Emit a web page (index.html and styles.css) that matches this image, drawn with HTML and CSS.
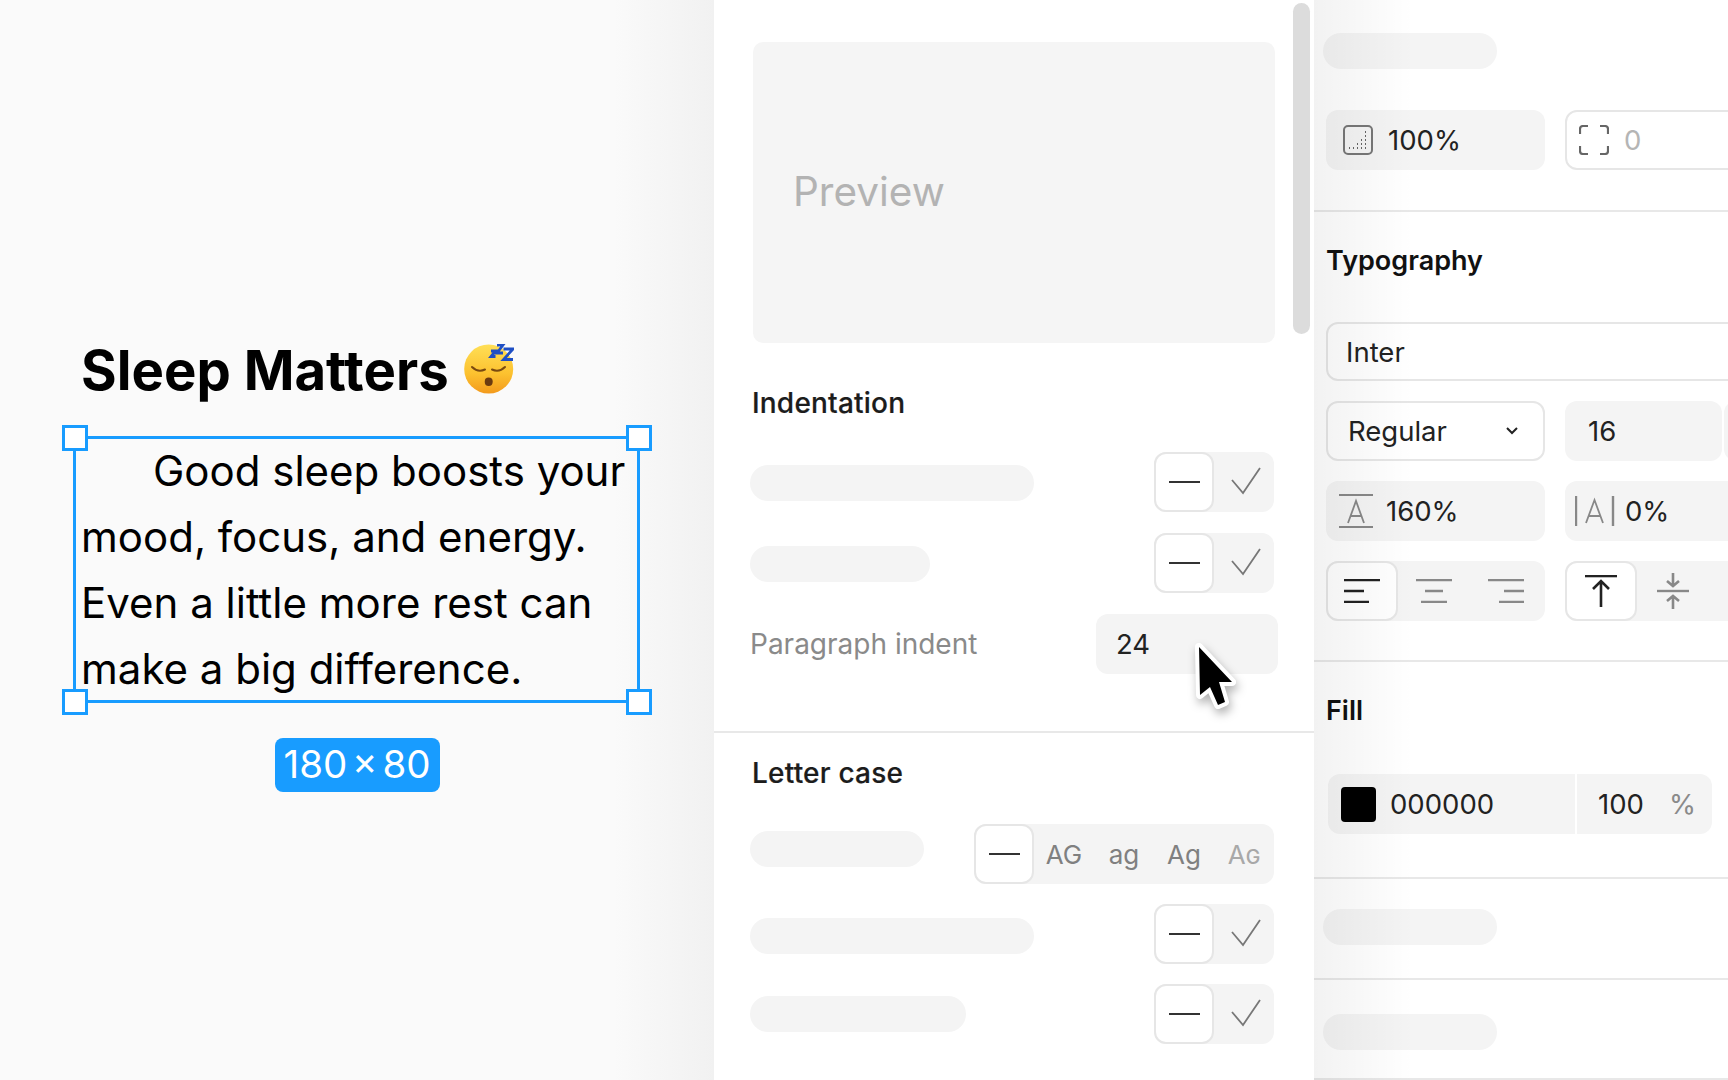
FILE: index.html
```html
<!DOCTYPE html>
<html lang="en">

<head>
  <meta charset="UTF-8">
  <title>Typography panel</title>
  <link rel="stylesheet" href="styles.css">
</head>

<body>
  <svg class="defs" width="0" height="0">
    <symbol id="minus" viewBox="0 0 60 60">
      <path d="M15 30H46" fill="none" stroke="#333" stroke-width="2" />
    </symbol>
    <symbol id="check" viewBox="0 0 60 60">
      <path d="M18 28L29 41L46 16" fill="none" stroke="#777" stroke-width="1.8" />
    </symbol>
  </svg>

  <div class="canvas">
    <h1 class="title">Sleep Matters
      <svg class="emoji" width="50" height="51" viewBox="0 -1 50 51">
        <defs>
          <linearGradient id="face" x1="0" y1="0" x2="0" y2="1">
            <stop offset="0" stop-color="#ffdf56" />
            <stop offset="0.6" stop-color="#fcc12f" />
            <stop offset="1" stop-color="#f39a1c" />
          </linearGradient>
        </defs>
        <circle cx="24.700" cy="24" r="24.500" fill="url(#face)" />
        <path d="M8 22Q14 28 21 24.500M28 24.500Q35 28 41 22" fill="none" stroke="#7a4a10" stroke-width="2" stroke-linecap="round" />
        <ellipse cx="24.700" cy="36.700" rx="4" ry="4.200" fill="#6b3a10" />
        <path d="M27 6h4.500l-4.500 5.500h4.500M33 0h6l-6 8h6M39.500 4h9.500l-9.500 10.500h9.500" fill="none" stroke="#1f4fc4" stroke-width="2.800" />
      </svg>
    </h1>
    <div class="selection">
      <p class="selection-text">Good sleep boosts your mood, focus, and energy. Even a little more rest can make a big difference.</p>
      <span class="handle top-left"></span>
      <span class="handle top-right"></span>
      <span class="handle bottom-left"></span>
      <span class="handle bottom-right"></span>
    </div>
    <div class="size-badge">180 × 80</div>
  </div>

  <div class="settings">
    <div class="scrollbar"></div>
    <div class="preview">Preview</div>

    <section class="settings-section first">
      <h2 class="section-title">Indentation</h2>
      <div class="rows">
        <div class="row">
          <div class="pill w-284 low"></div>
          <div class="segmented">
            <div class="seg active"><svg width="60" height="60"><use href="#minus" /></svg></div>
            <div class="seg"><svg width="60" height="60"><use href="#check" /></svg></div>
          </div>
        </div>
        <div class="row">
          <div class="pill w-180 low"></div>
          <div class="segmented">
            <div class="seg active"><svg width="60" height="60"><use href="#minus" /></svg></div>
            <div class="seg"><svg width="60" height="60"><use href="#check" /></svg></div>
          </div>
        </div>
        <div class="row">
          <span class="row-label">Paragraph indent</span>
          <div class="indent-input">24</div>
        </div>
      </div>
    </section>

    <section class="settings-section second">
      <h2 class="section-title">Letter case</h2>
      <div class="rows tight">
        <div class="row">
          <div class="pill w-174 up"></div>
          <div class="segmented">
            <div class="seg active"><svg width="60" height="60"><use href="#minus" /></svg></div>
            <div class="seg case">AG</div>
            <div class="seg case">ag</div>
            <div class="seg case">Ag</div>
            <div class="seg case small">Ag</div>
          </div>
        </div>
        <div class="row">
          <div class="pill w-284 down"></div>
          <div class="segmented">
            <div class="seg active"><svg width="60" height="60"><use href="#minus" /></svg></div>
            <div class="seg"><svg width="60" height="60"><use href="#check" /></svg></div>
          </div>
        </div>
        <div class="row">
          <div class="pill w-216"></div>
          <div class="segmented">
            <div class="seg active"><svg width="60" height="60"><use href="#minus" /></svg></div>
            <div class="seg"><svg width="60" height="60"><use href="#check" /></svg></div>
          </div>
        </div>
      </div>
    </section>
  </div>

  <div class="inspector">
    <section class="block block-layer">
      <div class="pill block-pill"></div>
      <div class="field-row">
        <div class="field">
          <svg class="field-icon" width="30" height="30" viewBox="0 0 30 30">
            <rect x="1" y="1" width="28" height="28" rx="4" fill="none" stroke="#777" stroke-width="2" />
            <path d="M6 23h1M10 23h1M14 23h1M18 23h1M22 23h1M14 19h1M18 19h1M22 19h1M18 15h1M22 15h1M22 11h1M22 7h1" stroke="#666" stroke-width="1.800" />
          </svg>
          100%
        </div>
        <div class="field outlined corner-field">
          <svg class="field-icon" width="30" height="30" viewBox="0 0 30 30">
            <path d="M1 9V4Q1 1 4 1H9M21 1H26Q29 1 29 4V9M29 21V26Q29 29 26 29H21M9 29H4Q1 29 1 26V21" fill="none" stroke="#666" stroke-width="2.200" />
          </svg>
          <span class="muted">0</span>
        </div>
      </div>
    </section>

    <section class="block block-type">
      <h2 class="block-title">Typography</h2>
      <div class="field outlined font-field">Inter</div>
      <div class="field-row">
        <div class="field outlined style-field">Regular
          <svg width="14" height="10" viewBox="0 0 14 10">
            <path d="M2 2L7 7L12 2" fill="none" stroke="#222" stroke-width="2" />
          </svg>
        </div>
        <div class="size-group">
          <div class="field size-field">16</div>
          <div class="field size-rest"></div>
        </div>
      </div>
      <div class="field-row">
        <div class="field line-field">
          <svg class="metric-icon" width="34" height="34" viewBox="0 0 34 34">
            <path d="M0 1H34M0 33H34" stroke="#888" stroke-width="2" />
            <path d="M9 29L17 7L25 29M12 22H22" fill="none" stroke="#888" stroke-width="1.800" />
          </svg>
          160%
        </div>
        <div class="field spacing-field">
          <svg class="metric-icon" width="40" height="30" viewBox="0 0 40 30">
            <path d="M1 0V30M38 0V30" stroke="#888" stroke-width="2.400" />
            <path d="M11 27L19.500 4L28 27M14 20H25" fill="none" stroke="#888" stroke-width="1.800" />
          </svg>
          0%
        </div>
      </div>
      <div class="field-row">
        <div class="segmented align-group">
          <div class="seg align active">
            <svg width="36" height="24" viewBox="0 0 36 24">
              <path d="M0 1H36M0 12H20M0 23H25" stroke="#222" stroke-width="2.400" />
            </svg>
          </div>
          <div class="seg align">
            <svg width="36" height="24" viewBox="0 0 36 24">
              <path d="M0 1H36M9 12H27M5 23H31" stroke="#888" stroke-width="2.400" />
            </svg>
          </div>
          <div class="seg align">
            <svg width="36" height="24" viewBox="0 0 36 24">
              <path d="M0 1H36M16 12H36M11 23H36" stroke="#888" stroke-width="2.400" />
            </svg>
          </div>
        </div>
        <div class="segmented valign-group">
          <div class="seg align active">
            <svg width="34" height="32" viewBox="0 0 34 32">
              <path d="M1 1H33" stroke="#222" stroke-width="2.600" />
              <path d="M17 32V6M9 14L17 6L25 14" fill="none" stroke="#222" stroke-width="2.600" />
            </svg>
          </div>
          <div class="seg align">
            <svg width="34" height="36" viewBox="0 0 34 36">
              <path d="M1 18H33" stroke="#888" stroke-width="2.400" />
              <path d="M17 0V13M11 8L17 13L23 8M17 36V23M11 28L17 23L23 28" fill="none" stroke="#888" stroke-width="2.600" />
            </svg>
          </div>
        </div>
      </div>
    </section>

    <section class="block block-fill">
      <h2 class="block-title">Fill</h2>
      <div class="fill-field">
        <div class="fill-color">
          <span class="swatch"></span>
          000000
        </div>
        <div class="fill-opacity">100<span class="percent">%</span></div>
      </div>
    </section>

    <section class="block block-empty one">
      <div class="pill block-pill"></div>
    </section>
    <section class="block block-empty two">
      <div class="pill block-pill"></div>
    </section>
  </div>

  <svg class="cursor" width="70" height="80" viewBox="0 0 70 80">
    <path d="M5 5L38 40H25L31 60L24 63L16 45L6 53Z" fill="#000" stroke="#fff" stroke-width="8" stroke-linejoin="round" paint-order="stroke" />
  </svg>
</body>

</html>
```

FILE: styles.css
```css
* {
  margin: 0;
  padding: 0;
  box-sizing: border-box;
}

body {
  display: flex;
  width: 1728px;
  height: 1080px;
  overflow: hidden;
  background-color: #fff;
  color: #222;
  font-family: "Inter", sans-serif;
  font-size: 27.5px;
}

.defs {
  position: absolute;
}

/* canvas on the left */
.canvas {
  width: 714px;
  flex-shrink: 0;
  padding-top: 335px;
  background: linear-gradient(90deg, #fafafa 86%, #f1f1f1 100%);
  color: #000;
}

.title {
  display: flex;
  align-items: center;
  gap: 15px;
  height: 70px;
  margin-left: 81px;
  font-size: 54.500px;
  font-weight: 700;
  line-height: 70px;
}

.emoji {
  margin-top: -2px;
}

.selection {
  position: relative;
  width: 567px;
  height: 267px;
  margin-top: 31px;
  margin-left: 73px;
  padding: 0 5px;
  border: 3px solid #189cff;
}

.selection-text {
  margin-top: -1px;
  font-size: 42px;
  line-height: 66px;
  text-indent: 72px;
}

.handle {
  position: absolute;
  width: 26px;
  height: 26px;
  background-color: #fff;
  border: 3px solid #189cff;
}

.top-left {
  top: -14px;
  left: -14px;
}

.top-right {
  top: -14px;
  right: -15px;
}

.bottom-left {
  bottom: -15px;
  left: -14px;
}

.bottom-right {
  bottom: -15px;
  right: -15px;
}

.size-badge {
  width: 165px;
  height: 54px;
  margin-top: 35px;
  margin-left: 274.500px;
  background-color: #189cff;
  border-radius: 8px;
  color: #fff;
  font-size: 38.500px;
  line-height: 52px;
  text-align: center;
  word-spacing: -6px;
}

/* middle panel */
.settings {
  position: relative;
  width: 600px;
  flex-shrink: 0;
  padding-top: 42px;
  background-color: #fff;
}

.scrollbar {
  position: absolute;
  top: 3px;
  left: 579px;
  width: 17px;
  height: 331px;
  background-color: #dcdcdc;
  border-radius: 9px;
}

.preview {
  display: flex;
  align-items: center;
  width: 522px;
  height: 301px;
  margin-left: 39px;
  padding-bottom: 2px;
  padding-left: 40px;
  background-color: #f5f5f5;
  border-radius: 10px;
  color: #b3b3b3;
  font-size: 40.500px;
}

.settings-section {
  padding-right: 40px;
  padding-left: 36px;
}

.settings-section.first {
  height: 390px;
  padding-top: 44px;
  border-bottom: 2px solid #e8e8e8;
}

.settings-section.second {
  padding-top: 24px;
}

.section-title {
  margin-left: 2px;
  color: #1c1c1c;
  font-size: 28px;
  font-weight: 500;
  letter-spacing: 0.2px;
  line-height: 32px;
  -webkit-text-stroke: 0.2px #1c1c1c;
}

.rows {
  display: flex;
  flex-direction: column;
  gap: 21px;
  margin-top: 33px;
}

.rows.tight {
  gap: 20px;
  margin-top: 35px;
}

.row {
  display: flex;
  justify-content: space-between;
  align-items: center;
  height: 60px;
}

.pill {
  height: 36px;
  background-color: #f4f4f4;
  border-radius: 18px;
}

.pill.low {
  margin-top: 2px;
}

.pill.up {
  margin-bottom: 10px;
}

.pill.down {
  margin-top: 3px;
}

.w-284 {
  width: 284px;
}

.w-180 {
  width: 180px;
}

.w-174 {
  width: 174px;
}

.w-216 {
  width: 216px;
}

.segmented {
  display: flex;
  height: 60px;
  flex-shrink: 0;
  background-color: #f4f4f4;
  border-radius: 12px;
}

.seg {
  display: flex;
  justify-content: center;
  align-items: center;
  width: 60px;
  height: 60px;
  flex-shrink: 0;
}

.seg svg {
  display: block;
}

.seg.active {
  background-color: #fff;
  border: 2px solid #e6e6e6;
  border-radius: 12px;
}

.seg.active svg {
  margin: -2px;
}

.seg.case {
  color: #808080;
  font-size: 26px;
}

.seg.small {
  color: #a8a8a8;
  font-variant: small-caps;
}

.row-label {
  color: #8a8a8a;
  font-size: 28px;
}

.indent-input {
  width: 182px;
  height: 60px;
  margin-right: -4px;
  padding-left: 20px;
  background-color: #f4f4f4;
  border-radius: 12px;
  font-size: 27.500px;
  line-height: 60px;
}

/* right panel */
.inspector {
  position: relative;
  flex: 1;
  overflow: hidden;
}

.inspector::after {
  content: "";
  position: absolute;
  top: 0;
  left: 0;
  width: 100px;
  height: 100%;
  background: linear-gradient(90deg, rgba(0, 0, 0, 0.05), rgba(0, 0, 0, 0));
  pointer-events: none;
}

.block {
  border-bottom: 2px solid #e8e8e8;
}

.block-pill {
  width: 174px;
  margin-left: 9px;
}

.block-layer {
  height: 212px;
  padding-top: 33px;
}

.block-layer .field-row {
  margin-top: 41px;
}

.block-type {
  height: 450px;
  padding-top: 33px;
}

.block-fill {
  height: 217px;
  padding-top: 33px;
}

.block-empty.one {
  height: 101px;
  padding-top: 30px;
}

.block-empty.two {
  height: 100px;
  padding-top: 34px;
}

.block-title {
  margin-left: 12px;
  color: #111;
  font-size: 27px;
  font-weight: 600;
  line-height: 32px;
}

.field-row {
  display: flex;
  gap: 20px;
  width: 700px;
  margin-top: 20px;
  margin-left: 12px;
}

.field {
  display: flex;
  align-items: center;
  width: 219px;
  height: 60px;
  flex-shrink: 0;
  padding-left: 17px;
  background-color: #f4f4f4;
  border-radius: 12px;
}

.field.outlined {
  background-color: #fff;
  border: 2px solid #e6e6e6;
}

.field-row .field.corner-field {
  width: 400px;
  padding-left: 12px;
}

.field-icon {
  margin-right: 15px;
}

.muted {
  color: #b5b5b5;
}

.font-field {
  width: 500px;
  height: 59px;
  margin-top: 45px;
  margin-left: 12px;
  padding-left: 18px;
}

.style-field {
  justify-content: space-between;
  padding-right: 24px;
  padding-left: 20px;
}

.size-group {
  display: flex;
  gap: 2px;
}

.size-field {
  width: 157px;
  padding-left: 23px;
}

.line-field {
  padding-left: 13px;
}

.metric-icon {
  margin-right: 13px;
}

.spacing-field {
  width: 400px;
  padding-left: 10px;
}

.spacing-field .metric-icon {
  margin-right: 10px;
}

.align-group {
  width: 219px;
}

.valign-group {
  width: 400px;
}

.seg.align {
  width: 72px;
}

.seg.align svg {
  margin: 0;
}

.fill-field {
  display: flex;
  width: 384px;
  height: 60px;
  margin-top: 47px;
  margin-left: 14px;
  background-color: #f4f4f4;
  border-radius: 12px;
}

.fill-color {
  display: flex;
  align-items: center;
  gap: 14px;
  width: 249px;
  padding-left: 13px;
  border-right: 2px solid #fff;
}

.swatch {
  width: 35px;
  height: 35px;
  background-color: #000;
  border-radius: 4px;
}

.fill-opacity {
  display: flex;
  justify-content: space-between;
  align-items: center;
  flex: 1;
  padding-right: 16px;
  padding-left: 21px;
}

.percent {
  color: #8a8a8a;
}

/* mouse pointer on top of the input */
.cursor {
  position: absolute;
  top: 642px;
  left: 1194px;
  filter: drop-shadow(2px 5px 5px rgba(0, 0, 0, 0.3));
}
```
